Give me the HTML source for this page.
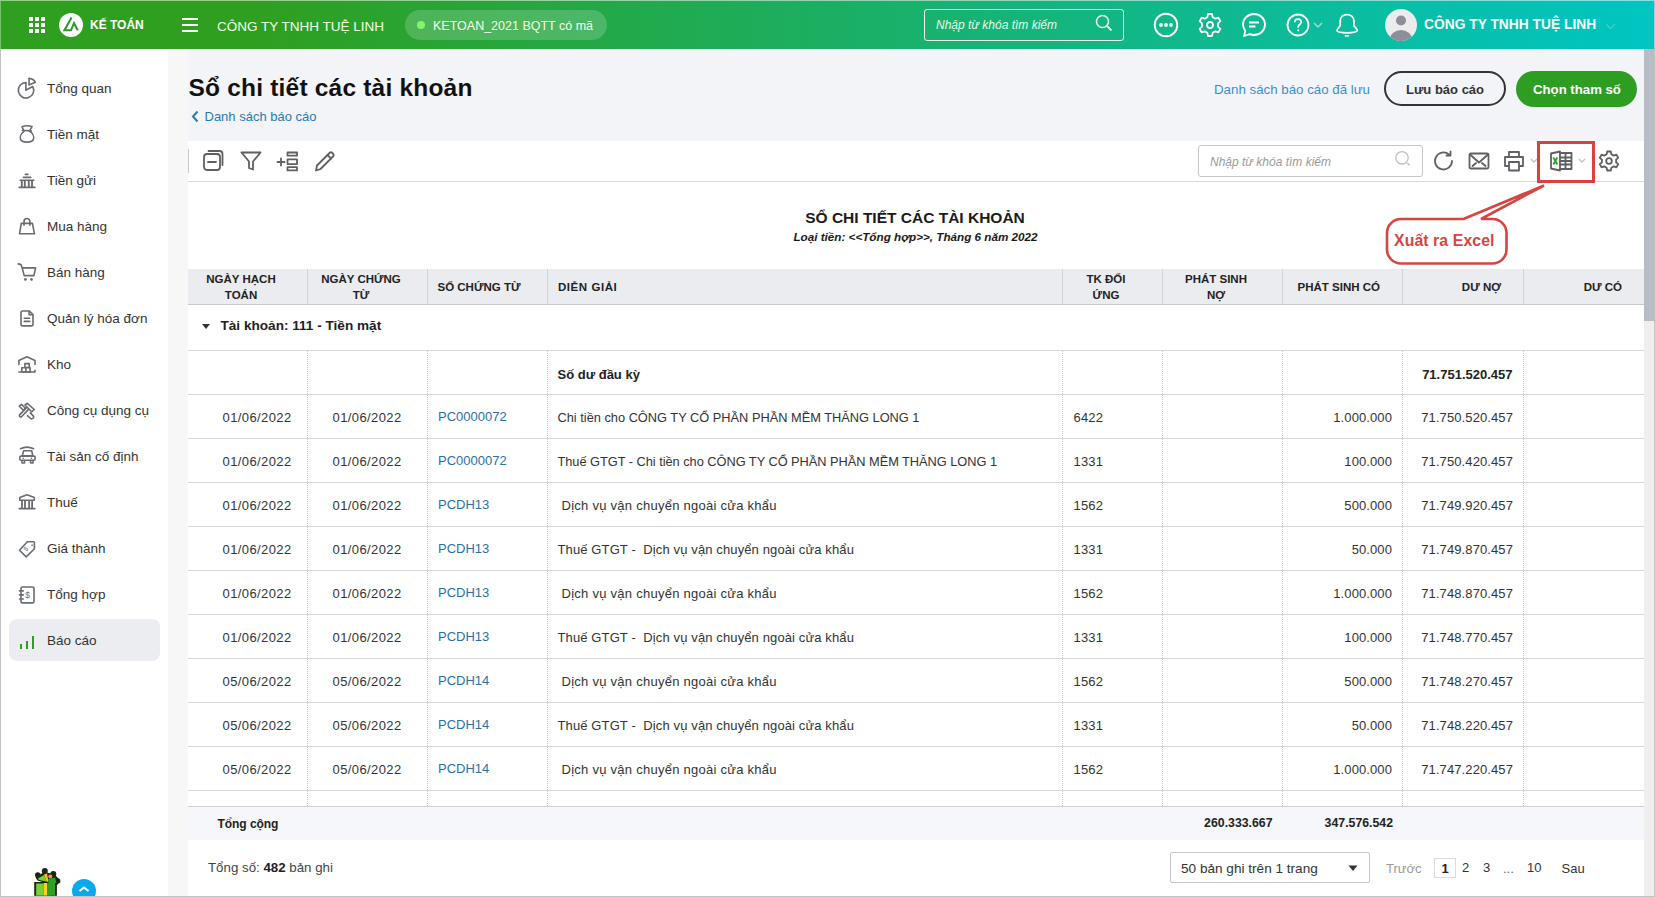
<!DOCTYPE html>
<html><head><meta charset="utf-8">
<style>
*{margin:0;padding:0;box-sizing:border-box}
html,body{width:1655px;height:897px;overflow:hidden;background:#f3f4f8;font-family:"Liberation Sans",sans-serif;color:#333}
.a{position:absolute}
.t{position:absolute;white-space:nowrap;line-height:1}
svg{display:block}
</style></head><body>
<div class="a" style="left:0px;top:0px;width:1655px;height:49px;background:linear-gradient(90deg,#2f9f1f 15%,#00c5c3 100%)"></div>
<div class="a" style="left:0px;top:0px;width:1655px;height:1px;background:rgba(255,255,255,0.5)"></div>
<div class="a" style="left:0px;top:1px;width:1px;height:48px;background:rgba(255,255,255,0.35)"></div>
<svg class="a" style="left:29px;top:17px;" width="16" height="16" viewBox="0 0 16 16"><g fill="#fff"><rect x="0" y="0" width="4" height="4"/><rect x="6" y="0" width="4" height="4"/><rect x="12" y="0" width="4" height="4"/><rect x="0" y="6" width="4" height="4"/><rect x="6" y="6" width="4" height="4"/><rect x="12" y="6" width="4" height="4"/><rect x="0" y="12" width="4" height="4"/><rect x="6" y="12" width="4" height="4"/><rect x="12" y="12" width="4" height="4"/></g></svg>
<svg class="a" style="left:59px;top:13px;" width="24" height="24" viewBox="0 0 24 24"><circle cx="12" cy="12" r="12" fill="#fff"/><path d="M12.6 4.6L5.4 17.3H12L15 10.2L18.8 17.3" fill="none" stroke="#2f9a2a" stroke-width="2.1" stroke-linejoin="miter"/></svg>
<div class="t" style="left:90px;top:19.04px;font-size:12px;color:#fff;font-weight:bold">KẾ TOÁN</div>
<svg class="a" style="left:182px;top:17px;" width="16" height="16" viewBox="0 0 16 16"><g fill="#fff"><rect x="0" y="1" width="16" height="2"/><rect x="0" y="7" width="16" height="2"/><rect x="0" y="13" width="16" height="2"/></g></svg>
<div class="t" style="left:217px;top:19.77px;font-size:13.5px;color:#f4ffe8">CÔNG TY TNHH TUỆ LINH</div>
<div class="a" style="left:405px;top:10px;width:202px;height:30px;border-radius:15px;background:rgba(255,255,255,0.18)"></div>
<div class="a" style="left:417px;top:21px;width:8px;height:8px;border-radius:4px;background:#82f56f"></div>
<div class="t" style="left:433px;top:19.62px;font-size:12.5px;color:#f4ffe8">KETOAN_2021 BQTT có mã</div>
<div class="a" style="left:924px;top:9px;width:200px;height:32px;border:1px solid rgba(255,255,255,0.9);border-radius:3px"></div>
<div class="t" style="left:936px;top:19.34px;font-size:12px;color:#e6fbe9;font-style:italic">Nhập từ khóa tìm kiếm</div>
<svg class="a" style="left:1095px;top:14px;" width="18" height="18" viewBox="0 0 18 18"><circle cx="7.5" cy="7.5" r="6" fill="none" stroke="#dff3ea" stroke-width="1.6"/><path d="M12 12 L16.5 16.5" stroke="#dff3ea" stroke-width="1.8"/></svg>
<svg class="a" style="left:1153px;top:12px;" width="26" height="26" viewBox="0 0 26 26"><circle cx="13" cy="13" r="11.3" fill="none" stroke="#fff" stroke-width="1.9"/><circle cx="8" cy="13" r="1.9" fill="#fff"/><circle cx="13" cy="13" r="1.9" fill="#fff"/><circle cx="18" cy="13" r="1.9" fill="#fff"/></svg>
<svg class="a" style="left:1198px;top:12px;" width="24" height="26" viewBox="0 0 24 26"><path d="M10 2h4l.7 3.2 2.6 1.5 3.1-1 2 3.5-2.4 2.2v3.2l2.4 2.2-2 3.5-3.1-1-2.6 1.5L14 24h-4l-.7-3.2-2.6-1.5-3.1 1-2-3.5 2.4-2.2v-3.2L1.6 9.2l2-3.5 3.1 1 2.6-1.5Z" fill="none" stroke="#fff" stroke-width="1.8" stroke-linejoin="round"/><circle cx="12" cy="13" r="3" fill="none" stroke="#fff" stroke-width="1.8"/></svg>
<svg class="a" style="left:1241px;top:12px;" width="26" height="26" viewBox="0 0 26 26"><path d="M13 2C19 2 24 6.5 24 12.5S19 23 13 23c-1.5 0-3-.3-4.2-.8L3 24l1.3-5C3.1 17.2 2 15 2 12.5 2 6.5 7 2 13 2Z" fill="none" stroke="#fff" stroke-width="1.8" stroke-linejoin="round"/><path d="M8 10.5h10M8 14.5h6.5" stroke="#fff" stroke-width="1.8"/></svg>
<svg class="a" style="left:1286px;top:13px;" width="24" height="24" viewBox="0 0 24 24"><circle cx="12" cy="12" r="10.5" fill="none" stroke="#fff" stroke-width="1.8"/><path d="M8.8 9.3c0-1.9 1.4-3.1 3.2-3.1s3.2 1.2 3.2 2.9c0 2.4-3 2.4-3 4.9v.8" fill="none" stroke="#fff" stroke-width="1.7"/><circle cx="12.2" cy="17.3" r="1.1" fill="#fff"/></svg>
<svg class="a" style="left:1313px;top:22px;" width="10" height="7" viewBox="0 0 10 7"><path d="M1 1l4 4 4-4" fill="none" stroke="#9fdcc8" stroke-width="1.5"/></svg>
<svg class="a" style="left:1335px;top:12px;" width="24" height="26" viewBox="0 0 24 26"><path d="M12 2.6C8 2.6 5.2 5.2 5.2 9V13C5.2 15 2 16.5 2 18.6 2 20.2 4.5 20.8 12 20.8S22.2 20.2 22.2 18.6C22.2 16.5 18.9 15 18.9 13V9C18.9 5.2 16 2.6 12 2.6Z" fill="none" stroke="#fff" stroke-width="1.8"/><path d="M9.4 23H14.6L13.5 24.7H10.5Z" fill="#fff"/></svg>
<svg class="a" style="left:1385px;top:9px;" width="32" height="32" viewBox="0 0 32 32"><defs><clipPath id="cc"><circle cx="16" cy="16" r="16"/></clipPath></defs><circle cx="16" cy="16" r="16" fill="#ececee"/><g clip-path="url(#cc)" fill="#8e8e99"><circle cx="16" cy="11.5" r="5"/><ellipse cx="16" cy="30" rx="11" ry="9"/></g></svg>
<div class="t" style="left:1424px;top:18.32px;font-size:13.8px;color:#f4fffc;font-weight:bold">CÔNG TY TNHH TUỆ LINH</div>
<svg class="a" style="left:1605px;top:23px;" width="11" height="7" viewBox="0 0 11 7"><path d="M1 1l4.5 4.5L10 1" fill="none" stroke="#3ccfc0" stroke-width="1.3"/></svg>
<div class="a" style="left:1654px;top:0px;width:1px;height:49px;background:#b5c8c8"></div>
<div class="a" style="left:0px;top:49px;width:168px;height:848px;background:#fff"></div>
<div class="a" style="left:0px;top:49px;width:1px;height:848px;background:#c2c2c2"></div>
<div class="a" style="left:168px;top:49px;width:20px;height:848px;background:#f7f7f7"></div>
<div class="a" style="left:9px;top:619px;width:151px;height:42px;background:#ebedf0;border-radius:8px"></div>
<div class="t" style="left:47px;top:82.07px;font-size:13.5px;color:#333">Tổng quan</div>
<svg class="a" style="left:14px;top:74px;" width="26" height="26" viewBox="0 0 26 26"><path d="M12 8.6A7.7 7.7 0 1 0 18.7 12.5L11.8 16.2Z" fill="none" stroke="#6b6b70" stroke-width="1.6" stroke-linejoin="round" stroke-linecap="round"/><path d="M15 4.4V11L21.3 8.3C20.2 6 18 4.6 15 4.4Z" fill="none" stroke="#6b6b70" stroke-width="1.6" stroke-linejoin="round" stroke-linecap="round"/></svg>
<div class="t" style="left:47px;top:128.07px;font-size:13.5px;color:#333">Tiền mặt</div>
<svg class="a" style="left:14px;top:120px;" width="26" height="26" viewBox="0 0 26 26"><path d="M8 6.7Q13 5 18 6.5L15.6 10.9Q12.6 10.2 9.7 10.6Z" fill="none" stroke="#6b6b70" stroke-width="1.6" stroke-linejoin="round" stroke-linecap="round"/><path d="M8.4 10.3L9.8 10.7M15.6 10.9L17.4 11.1" fill="none" stroke="#6b6b70" stroke-width="1.6" stroke-linejoin="round" stroke-linecap="round"/><path d="M10 11.4C6.2 14.2 5.8 17.8 6.7 19.7 7.8 22 10.4 22.1 13 22.1S18.2 22 19.3 19.7C20.2 17.8 19.8 14.2 15.9 11.4" fill="none" stroke="#6b6b70" stroke-width="1.6" stroke-linejoin="round" stroke-linecap="round"/></svg>
<div class="t" style="left:47px;top:174.07px;font-size:13.5px;color:#333">Tiền gửi</div>
<svg class="a" style="left:14px;top:166px;" width="26" height="26" viewBox="0 0 26 26"><path d="M11.4 8.4H13.9M9.3 11.4H16.8M6.2 14.3H19.9M5.2 21.4H20.9" fill="none" stroke="#6b6b70" stroke-width="1.6" stroke-linejoin="round" stroke-linecap="round"/><path d="M7.8 14.3V21.4M10.8 14.3V21.4M14.8 14.3V21.4M18 14.3V21.4" fill="none" stroke="#6b6b70" stroke-width="1.9"/></svg>
<div class="t" style="left:47px;top:220.07px;font-size:13.5px;color:#333">Mua hàng</div>
<svg class="a" style="left:14px;top:212px;" width="26" height="26" viewBox="0 0 26 26"><path d="M7.3 11.4H18.4L20.5 21.8H5.5Z" fill="none" stroke="#6b6b70" stroke-width="1.6" stroke-linejoin="round" stroke-linecap="round"/><path d="M10 13.3V9.5A2.95 2.95 0 0 1 15.9 9.5V13.3" fill="none" stroke="#6b6b70" stroke-width="1.6" stroke-linejoin="round" stroke-linecap="round"/></svg>
<div class="t" style="left:47px;top:266.07px;font-size:13.5px;color:#333">Bán hàng</div>
<svg class="a" style="left:14px;top:258px;" width="26" height="26" viewBox="0 0 26 26"><path d="M4.2 5.9L7 6.6L8.2 9.9H21.6L19.9 17.6H10.2L8.2 9.9" fill="none" stroke="#6b6b70" stroke-width="1.6" stroke-linejoin="round" stroke-linecap="round"/><circle cx="11.4" cy="21.4" r="1.35" fill="#6b6b70"/><circle cx="17.5" cy="21.4" r="1.35" fill="#6b6b70"/></svg>
<div class="t" style="left:47px;top:312.07px;font-size:13.5px;color:#333">Quản lý hóa đơn</div>
<svg class="a" style="left:14px;top:304px;" width="26" height="26" viewBox="0 0 26 26"><path d="M8.5 7H15.3L19 10.6V20.4A1.5 1.5 0 0 1 17.5 21.9H8.5A1.5 1.5 0 0 1 7 20.4V8.5A1.5 1.5 0 0 1 8.5 7Z" fill="none" stroke="#6b6b70" stroke-width="1.6" stroke-linejoin="round" stroke-linecap="round"/><path d="M15.1 7.2V10.7H18.8M10.3 14.3H15.7M10.3 17.4H15.7" fill="none" stroke="#6b6b70" stroke-width="1.6" stroke-linejoin="round" stroke-linecap="round"/></svg>
<div class="t" style="left:47px;top:358.07px;font-size:13.5px;color:#333">Kho</div>
<svg class="a" style="left:14px;top:350px;" width="26" height="26" viewBox="0 0 26 26"><path d="M4.9 14.5V10.4L12.9 6.8L21 10.4V14.5M4.9 22H21V20.3" fill="none" stroke="#6b6b70" stroke-width="1.6" stroke-linejoin="round" stroke-linecap="round"/><path d="M10.9 13.6H15.2V17.6H10.9ZM7.8 17.7H11.9V22H7.8ZM11.9 17.7H16.1V22H11.9Z" fill="none" stroke="#6b6b70" stroke-width="1.6" stroke-linejoin="round" stroke-linecap="round"/></svg>
<div class="t" style="left:47px;top:404.07px;font-size:13.5px;color:#333">Công cụ dụng cụ</div>
<svg class="a" style="left:14px;top:396px;" width="26" height="26" viewBox="0 0 26 26"><path d="M11 9L13.2 7.4L20.3 13.5L17.6 15.8Z" fill="none" stroke="#6b6b70" stroke-width="1.6" stroke-linejoin="round" stroke-linecap="round"/><path d="M14.3 13.6L7.5 20.8A1.4 1.4 0 0 1 5.6 18.9L12.3 11.9" fill="none" stroke="#6b6b70" stroke-width="1.6" stroke-linejoin="round" stroke-linecap="round"/><path d="M5.3 10.2L7.5 8.3L11.4 12.2L9.4 14.3Z" fill="none" stroke="#6b6b70" stroke-width="1.6" stroke-linejoin="round" stroke-linecap="round"/><path d="M16.3 16.9L19 19.6A1.9 1.9 0 0 1 16.3 22.3L13.5 19.6" fill="none" stroke="#6b6b70" stroke-width="1.6" stroke-linejoin="round" stroke-linecap="round"/></svg>
<div class="t" style="left:47px;top:450.07px;font-size:13.5px;color:#333">Tài sản cố định</div>
<svg class="a" style="left:14px;top:442px;" width="26" height="26" viewBox="0 0 26 26"><path d="M6.5 6.7Q13 3.5 19.7 6.7" fill="none" stroke="#6b6b70" stroke-width="1.6" stroke-linejoin="round" stroke-linecap="round"/><path d="M9.6 8.7H17.7L18.8 13.8H8.3Z" fill="none" stroke="#6b6b70" stroke-width="1.6" stroke-linejoin="round" stroke-linecap="round"/><rect x="5.8" y="14.1" width="15.3" height="4.2" rx="1.2" fill="none" stroke="#6b6b70" stroke-width="1.6" stroke-linejoin="round" stroke-linecap="round"/><circle cx="9.3" cy="16.3" r="0.8" fill="#6b6b70"/><circle cx="17.4" cy="16.3" r="0.8" fill="#6b6b70"/><path d="M8 18.5V21H10.5V18.5M16.6 18.5V21H19V18.5" fill="none" stroke="#6b6b70" stroke-width="1.6" stroke-linejoin="round" stroke-linecap="round"/></svg>
<div class="t" style="left:47px;top:496.07px;font-size:13.5px;color:#333">Thuế</div>
<svg class="a" style="left:14px;top:488px;" width="26" height="26" viewBox="0 0 26 26"><path d="M5.8 12.2V9.6L13 6.7L20.3 9.6V12.2Z" fill="none" stroke="#6b6b70" stroke-width="1.6" stroke-linejoin="round" stroke-linecap="round"/><path d="M8 12.2V20.5M11 12.2V20.5M15.1 12.2V20.5M18.1 12.2V20.5" fill="none" stroke="#6b6b70" stroke-width="1.8"/><path d="M5.2 20.6H20.9" fill="none" stroke="#6b6b70" stroke-width="1.6" stroke-linejoin="round" stroke-linecap="round"/></svg>
<div class="t" style="left:47px;top:542.07px;font-size:13.5px;color:#333">Giá thành</div>
<svg class="a" style="left:14px;top:534px;" width="26" height="26" viewBox="0 0 26 26"><path d="M13.3 7.8H19.4A1 1 0 0 1 20.4 8.8V14.8L12.2 22.9L5.5 16.2Z" fill="none" stroke="#6b6b70" stroke-width="1.6" stroke-linejoin="round" stroke-linecap="round"/><rect x="17.4" y="10.4" width="1.4" height="1.4" fill="#6b6b70"/><text x="0" y="0" font-size="6.5" fill="#6b6b70" font-family="Liberation Sans" transform="translate(12.2 17.8) rotate(-45)">$</text></svg>
<div class="t" style="left:47px;top:588.07px;font-size:13.5px;color:#333">Tổng hợp</div>
<svg class="a" style="left:14px;top:580px;" width="26" height="26" viewBox="0 0 26 26"><rect x="7" y="7" width="13" height="15.9" rx="1.5" fill="none" stroke="#6b6b70" stroke-width="1.6" stroke-linejoin="round" stroke-linecap="round"/><path d="M5.5 10.9H9.3M5.5 14.9H9.3M5.5 19H9.3" fill="none" stroke="#6b6b70" stroke-width="1.6" stroke-linejoin="round" stroke-linecap="round"/><text x="11.2" y="18" font-size="8.5" fill="#6b6b70" font-family="Liberation Sans">$</text></svg>
<div class="t" style="left:47px;top:634.07px;font-size:13.5px;color:#333">Báo cáo</div>
<div class="a" style="left:20px;top:644px;width:2.2px;height:5px;background:#2e9e22"></div>
<div class="a" style="left:26px;top:641px;width:2.2px;height:8px;background:#2e9e22"></div>
<div class="a" style="left:32px;top:636px;width:2.2px;height:13px;background:#2e9e22"></div>
<svg class="a" style="left:33px;top:866px;" width="28" height="31" viewBox="0 0 28 31"><g fill="#1d2618"><circle cx="4.8" cy="9" r="2.8"/><circle cx="11.8" cy="5" r="3"/><circle cx="20.3" cy="8" r="3"/><circle cx="24.6" cy="15" r="2.8"/><path d="M2.5 11.5L11 6L21 8L26 13L24.5 19L14 17.5L4.5 14.5Z"/><rect x="1.2" y="16" width="22.7" height="13.8"/></g><path d="M5 12.5L11 9L13.5 15.5L6 14Z" fill="#79d13a"/><path d="M11 8.5L14 7.5L15.5 16L13.5 15.5Z" fill="#ffc21a"/><circle cx="17.3" cy="10.5" r="2" fill="#f39a25"/><path d="M15 13L22 11.5L23.5 17L15.5 17Z" fill="#2fa024"/><rect x="3.2" y="17.5" width="7.6" height="12" fill="#79d13a"/><rect x="10.8" y="17" width="3.6" height="12.5" fill="#ffd21a"/><rect x="14.4" y="17" width="7.6" height="12.5" fill="#2fa024"/></svg>
<svg class="a" style="left:72px;top:879px;" width="24" height="18" viewBox="0 0 24 18"><circle cx="12" cy="12" r="12" fill="#0aa8ee"/><path d="M7.5 12l4.5-3.5 4.5 3.5" fill="none" stroke="#fff" stroke-width="2"/></svg>
<div class="t" style="left:188.5px;top:75.96px;font-size:24.5px;color:#111;font-weight:bold;letter-spacing:0.2px">Sổ chi tiết các tài khoản</div>
<svg class="a" style="left:191px;top:110px;" width="8" height="13" viewBox="0 0 8 13"><path d="M6.5 1.5L2 6.5l4.5 5" fill="none" stroke="#2c78b6" stroke-width="2"/></svg>
<div class="t" style="left:204.5px;top:109.90px;font-size:13px;color:#2c78b6">Danh sách báo cáo</div>
<div class="t" style="left:1214px;top:83.14px;font-size:13.3px;color:#3b8fd0">Danh sách báo cáo đã lưu</div>
<div class="a" style="left:1384px;top:71px;width:122px;height:35px;border:2px solid #333;border-radius:18px"></div>
<div class="t" style="left:1406px;top:83.40px;font-size:13px;color:#333;font-weight:bold">Lưu báo cáo</div>
<div class="a" style="left:1516px;top:71px;width:121px;height:36px;background:#2e9e22;border-radius:18px"></div>
<div class="t" style="left:1533px;top:83.23px;font-size:13.2px;color:#fff;font-weight:bold">Chọn tham số</div>
<div class="a" style="left:1644px;top:49px;width:11px;height:848px;background:#efefef"></div>
<div class="a" style="left:1644px;top:49px;width:10px;height:272px;background:#b8bcc5"></div>
<div class="a" style="left:1654px;top:49px;width:1px;height:848px;background:#c4c4c4"></div>
<div class="a" style="left:188px;top:141px;width:1456px;height:755px;background:#fff"></div>
<div class="a" style="left:188px;top:181px;width:1456px;height:1px;background:#dadada"></div>
<div class="a" style="left:188px;top:149px;width:1px;height:24px;background:#c8c8c8"></div>
<svg class="a" style="left:202px;top:149px;" width="24" height="23" viewBox="0 0 24 23"><rect x="2" y="5" width="16" height="16" rx="3" fill="none" stroke="#5f5f64" stroke-width="1.8" stroke-linejoin="round" stroke-linecap="round"/><path d="M6 13h8" fill="none" stroke="#5f5f64" stroke-width="1.8" stroke-linejoin="round" stroke-linecap="round"/><path d="M6.5 2h11a3 3 0 0 1 3 3v11" fill="none" stroke="#5f5f64" stroke-width="1.8" stroke-linejoin="round" stroke-linecap="round"/></svg>
<svg class="a" style="left:240px;top:151px;" width="22" height="20" viewBox="0 0 22 20"><path d="M1.5 1.5h19l-7.5 9v8l-4-1.5v-6.5Z" fill="none" stroke="#5f5f64" stroke-width="1.8" stroke-linejoin="round" stroke-linecap="round"/></svg>
<svg class="a" style="left:276px;top:151px;" width="23" height="21" viewBox="0 0 23 21"><path d="M1.5 11h7M5 7.5v7" fill="none" stroke="#5f5f64" stroke-width="1.8" stroke-linejoin="round" stroke-linecap="round"/><rect x="11.5" y="1.5" width="9.5" height="3.2" fill="none" stroke="#5f5f64" stroke-width="1.8" stroke-linejoin="round" stroke-linecap="round"/><rect x="11.5" y="8.3" width="9.5" height="4.8" fill="none" stroke="#5f5f64" stroke-width="1.8" stroke-linejoin="round" stroke-linecap="round"/><rect x="11.5" y="16.2" width="9.5" height="3.2" fill="none" stroke="#5f5f64" stroke-width="1.8" stroke-linejoin="round" stroke-linecap="round"/></svg>
<svg class="a" style="left:314px;top:150px;" width="22" height="22" viewBox="0 0 22 22"><path d="M2 20.5l1-5L15.5 3a2 2 0 0 1 2.8 0l.7.7a2 2 0 0 1 0 2.8L6.5 19Z" fill="none" stroke="#5f5f64" stroke-width="1.8" stroke-linejoin="round" stroke-linecap="round"/><path d="M13.5 5l3.5 3.5" fill="none" stroke="#5f5f64" stroke-width="1.8" stroke-linejoin="round" stroke-linecap="round"/></svg>
<div class="a" style="left:1198px;top:145px;width:225px;height:32px;border:1px solid #c6c6ca;border-radius:3px"></div>
<div class="t" style="left:1210px;top:155.54px;font-size:12px;color:#9a9a9a;font-style:italic">Nhập từ khóa tìm kiếm</div>
<svg class="a" style="left:1394px;top:150px;" width="18" height="18" viewBox="0 0 18 18"><circle cx="8" cy="7.8" r="6.2" fill="none" stroke="#c2c2c2" stroke-width="1.4"/><path d="M13.3 13.1l2.2 2.2" stroke="#c2c2c2" stroke-width="1.6"/></svg>
<svg class="a" style="left:1433px;top:150px;" width="22" height="22" viewBox="0 0 22 22"><path d="M19 11a8.5 8.5 0 1 1-3-6.5" fill="none" stroke="#5f5f64" stroke-width="1.8" stroke-linejoin="round" stroke-linecap="round"/><path d="M17.5 1.5v4h-4" fill="none" stroke="#5f5f64" stroke-width="1.8" stroke-linejoin="round" stroke-linecap="round"/></svg>
<svg class="a" style="left:1468px;top:152px;" width="22" height="18" viewBox="0 0 22 18"><rect x="1.5" y="1.5" width="19" height="15" rx="1.5" fill="none" stroke="#5f5f64" stroke-width="1.8" stroke-linejoin="round" stroke-linecap="round"/><path d="M2 2.5l9 8 9-8M4.5 14l3.5-3M17.5 14l-3.5-3" fill="none" stroke="#5f5f64" stroke-width="1.8" stroke-linejoin="round" stroke-linecap="round"/></svg>
<svg class="a" style="left:1503px;top:150px;" width="22" height="22" viewBox="0 0 22 22"><path d="M6 6V2h10v4" fill="none" stroke="#5f5f64" stroke-width="1.8" stroke-linejoin="round" stroke-linecap="round"/><path d="M5 16H2V7h18v9h-3" fill="none" stroke="#5f5f64" stroke-width="1.8" stroke-linejoin="round" stroke-linecap="round"/><rect x="6" y="12" width="10" height="8.5" fill="none" stroke="#5f5f64" stroke-width="1.8" stroke-linejoin="round" stroke-linecap="round"/></svg>
<svg class="a" style="left:1530px;top:158px;" width="8" height="6" viewBox="0 0 8 6"><path d="M1 1l3 3 3-3" fill="none" stroke="#c2c2c8" stroke-width="1.4"/></svg>
<svg class="a" style="left:1549px;top:150px;" width="25" height="22" viewBox="0 0 25 22"><path d="M2 3.5l9-2v19l-9-2Z" fill="none" stroke="#5f5f64" stroke-width="1.8" stroke-linejoin="round" stroke-linecap="round"/><path d="M11 3h11.5v16H11M11 7.5h11.5M11 11h11.5M11 14.5h11.5M16.5 3v16" fill="none" stroke="#5f5f64" stroke-width="1.8" stroke-linejoin="round" stroke-linecap="round"/><path d="M4.3 7.5l4 7M8.3 7.5l-4 7" stroke="#2e9e22" stroke-width="1.8"/></svg>
<svg class="a" style="left:1578px;top:158px;" width="8" height="6" viewBox="0 0 8 6"><path d="M1 1l3 3 3-3" fill="none" stroke="#c2c2c8" stroke-width="1.4"/></svg>
<svg class="a" style="left:1598px;top:150px;" width="22" height="22" viewBox="0 0 22 22"><path d="M9.2 1.5h3.6l.6 2.8 2.3 1.3 2.7-.9 1.8 3.1-2.1 1.9v2.6l2.1 1.9-1.8 3.1-2.7-.9-2.3 1.3-.6 2.8H9.2l-.6-2.8-2.3-1.3-2.7.9-1.8-3.1 2.1-1.9V9.7L1.8 7.8l1.8-3.1 2.7.9 2.3-1.3Z" fill="none" stroke="#5f5f64" stroke-width="1.8" stroke-linejoin="round" stroke-linecap="round"/><circle cx="11" cy="11" r="2.8" fill="none" stroke="#5f5f64" stroke-width="1.8" stroke-linejoin="round" stroke-linecap="round"/></svg>
<div class="a" style="left:1537px;top:141px;width:58px;height:42px;border:3px solid #d9413c"></div>
<svg class="a" style="left:1384px;top:182px;overflow:visible" width="130" height="85" viewBox="0 0 130 85"><path d="M79.5 37 L160 3.5 L97 37 H108.5 a14 14 0 0 1 14 14 V67.5 a14 14 0 0 1 -14 14 H17 a14 14 0 0 1 -14 -14 V51 a14 14 0 0 1 14 -14 Z" fill="#fff" stroke="#d64541" stroke-width="2.6" stroke-linejoin="miter"/></svg>
<div class="t" style="left:1394px;top:233.13px;font-size:15.8px;color:#d64541;font-weight:bold;letter-spacing:0.1px">Xuất ra Excel</div>
<div class="t" style="left:715.0px;width:400px;text-align:center;top:209.88px;font-size:15.5px;color:#1a1a1a;font-weight:bold">SỔ CHI TIẾT CÁC TÀI KHOẢN</div>
<div class="t" style="left:715.5px;width:400px;text-align:center;top:231.00px;font-size:11.7px;color:#1a1a1a;font-weight:bold;font-style:italic">Loại tiền: &lt;&lt;Tổng hợp&gt;&gt;, Tháng 6 năm 2022</div>
<div class="a" style="left:188px;top:269px;width:1456px;height:35px;background:#ebecf0"></div>
<div class="a" style="left:188px;top:304px;width:1456px;height:1px;background:#c9c9cc"></div>
<div class="a" style="left:307px;top:269px;width:1px;height:35px;background:#d3d3d6"></div>
<div class="a" style="left:427px;top:269px;width:1px;height:35px;background:#d3d3d6"></div>
<div class="a" style="left:547px;top:269px;width:1px;height:35px;background:#d3d3d6"></div>
<div class="a" style="left:1062px;top:269px;width:1px;height:35px;background:#d3d3d6"></div>
<div class="a" style="left:1162px;top:269px;width:1px;height:35px;background:#d3d3d6"></div>
<div class="a" style="left:1282px;top:269px;width:1px;height:35px;background:#d3d3d6"></div>
<div class="a" style="left:1402px;top:269px;width:1px;height:35px;background:#d3d3d6"></div>
<div class="a" style="left:1523px;top:269px;width:1px;height:35px;background:#d3d3d6"></div>
<div class="t" style="left:188.0px;width:106px;text-align:center;top:273.57px;font-size:11.5px;color:#222;font-weight:bold">NGÀY HẠCH</div>
<div class="t" style="left:188.0px;width:106px;text-align:center;top:289.97px;font-size:11.5px;color:#222;font-weight:bold">TOÁN</div>
<div class="t" style="left:307.0px;width:108px;text-align:center;top:273.57px;font-size:11.5px;color:#222;font-weight:bold">NGÀY CHỨNG</div>
<div class="t" style="left:307.0px;width:108px;text-align:center;top:289.97px;font-size:11.5px;color:#222;font-weight:bold">TỪ</div>
<div class="t" style="left:437.5px;top:281.77px;font-size:11.5px;color:#222;font-weight:bold">SỐ CHỨNG TỪ</div>
<div class="t" style="left:558px;top:281.77px;font-size:11.5px;color:#222;font-weight:bold;letter-spacing:0.55px">DIỄN GIẢI</div>
<div class="t" style="left:1062.0px;width:88px;text-align:center;top:273.57px;font-size:11.5px;color:#222;font-weight:bold">TK ĐỐI</div>
<div class="t" style="left:1062.0px;width:88px;text-align:center;top:289.97px;font-size:11.5px;color:#222;font-weight:bold">ỨNG</div>
<div class="t" style="left:1162.0px;width:108px;text-align:center;top:273.57px;font-size:11.5px;color:#222;font-weight:bold">PHÁT SINH</div>
<div class="t" style="left:1162.0px;width:108px;text-align:center;top:289.97px;font-size:11.5px;color:#222;font-weight:bold">NỢ</div>
<div class="t" style="right:275px;top:281.77px;font-size:11.5px;color:#222;font-weight:bold">PHÁT SINH CÓ</div>
<div class="t" style="right:154px;top:281.77px;font-size:11.5px;color:#222;font-weight:bold">DƯ NỢ</div>
<div class="t" style="right:33px;top:281.77px;font-size:11.5px;color:#222;font-weight:bold">DƯ CÓ</div>
<svg class="a" style="left:201px;top:323px;" width="10" height="7" viewBox="0 0 10 7"><path d="M1 1h8L5 6Z" fill="#333"/></svg>
<div class="t" style="left:220.5px;top:319.19px;font-size:13.6px;color:#222;font-weight:bold">Tài khoản: 111 - Tiền mặt</div>
<div class="a" style="left:188px;top:350px;width:1456px;height:1px;background:#d7d7d9"></div>
<div class="a" style="left:188px;top:394px;width:1456px;height:1px;background:#d7d7d9"></div>
<div class="a" style="left:188px;top:438px;width:1456px;height:1px;background:#d7d7d9"></div>
<div class="a" style="left:188px;top:482px;width:1456px;height:1px;background:#d7d7d9"></div>
<div class="a" style="left:188px;top:526px;width:1456px;height:1px;background:#d7d7d9"></div>
<div class="a" style="left:188px;top:570px;width:1456px;height:1px;background:#d7d7d9"></div>
<div class="a" style="left:188px;top:614px;width:1456px;height:1px;background:#d7d7d9"></div>
<div class="a" style="left:188px;top:658px;width:1456px;height:1px;background:#d7d7d9"></div>
<div class="a" style="left:188px;top:702px;width:1456px;height:1px;background:#d7d7d9"></div>
<div class="a" style="left:188px;top:746px;width:1456px;height:1px;background:#d7d7d9"></div>
<div class="a" style="left:188px;top:790px;width:1456px;height:1px;background:#d7d7d9"></div>
<div class="a" style="left:188px;top:806px;width:1456px;height:1px;background:#cfcfd2"></div>
<div class="a" style="left:307px;top:351px;width:1px;height:455px;border-left:1px dotted #c9c9cc"></div>
<div class="a" style="left:427px;top:351px;width:1px;height:455px;border-left:1px dotted #c9c9cc"></div>
<div class="a" style="left:547px;top:351px;width:1px;height:455px;border-left:1px dotted #c9c9cc"></div>
<div class="a" style="left:1062px;top:351px;width:1px;height:455px;border-left:1px dotted #c9c9cc"></div>
<div class="a" style="left:1162px;top:351px;width:1px;height:455px;border-left:1px dotted #c9c9cc"></div>
<div class="a" style="left:1282px;top:351px;width:1px;height:455px;border-left:1px dotted #c9c9cc"></div>
<div class="a" style="left:1402px;top:351px;width:1px;height:455px;border-left:1px dotted #c9c9cc"></div>
<div class="a" style="left:1523px;top:351px;width:1px;height:455px;border-left:1px dotted #c9c9cc"></div>
<div class="t" style="left:557.5px;top:367.50px;font-size:13px;color:#222;font-weight:bold">Số dư đầu kỳ</div>
<div class="t" style="right:142.5px;top:367.50px;font-size:13px;color:#222;font-weight:bold">71.751.520.457</div>
<div class="t" style="left:222.5px;top:411.40px;font-size:13px;color:#333;letter-spacing:0.4px">01/06/2022</div>
<div class="t" style="left:332.5px;top:411.40px;font-size:13px;color:#333;letter-spacing:0.4px">01/06/2022</div>
<div class="t" style="left:438px;top:410.40px;font-size:13px;color:#2d6fa9">PC0000072</div>
<div class="t" style="left:557.5px;top:411.56px;font-size:12.8px;color:#333">Chi tiền cho CÔNG TY CỔ PHẦN PHẦN MỀM THĂNG LONG 1</div>
<div class="t" style="left:1073.5px;top:411.40px;font-size:13px;color:#333;letter-spacing:0.2px">6422</div>
<div class="t" style="right:263px;top:411.40px;font-size:13px;color:#333;letter-spacing:0.1px">1.000.000</div>
<div class="t" style="right:142px;top:411.40px;font-size:13px;color:#333;letter-spacing:0.1px">71.750.520.457</div>
<div class="t" style="left:222.5px;top:455.40px;font-size:13px;color:#333;letter-spacing:0.4px">01/06/2022</div>
<div class="t" style="left:332.5px;top:455.40px;font-size:13px;color:#333;letter-spacing:0.4px">01/06/2022</div>
<div class="t" style="left:438px;top:454.40px;font-size:13px;color:#2d6fa9">PC0000072</div>
<div class="t" style="left:557.5px;top:455.56px;font-size:12.8px;color:#333;letter-spacing:-0.03px">Thuế GTGT - Chi tiền cho CÔNG TY CỔ PHẦN PHẦN MỀM THĂNG LONG 1</div>
<div class="t" style="left:1073.5px;top:455.40px;font-size:13px;color:#333;letter-spacing:0.2px">1331</div>
<div class="t" style="right:263px;top:455.40px;font-size:13px;color:#333;letter-spacing:0.1px">100.000</div>
<div class="t" style="right:142px;top:455.40px;font-size:13px;color:#333;letter-spacing:0.1px">71.750.420.457</div>
<div class="t" style="left:222.5px;top:499.40px;font-size:13px;color:#333;letter-spacing:0.4px">01/06/2022</div>
<div class="t" style="left:332.5px;top:499.40px;font-size:13px;color:#333;letter-spacing:0.4px">01/06/2022</div>
<div class="t" style="left:438px;top:498.40px;font-size:13px;color:#2d6fa9">PCDH13</div>
<div class="t" style="left:561.5px;top:499.40px;font-size:13px;color:#333;letter-spacing:0.26px">Dịch vụ vận chuyển ngoài cửa khẩu</div>
<div class="t" style="left:1073.5px;top:499.40px;font-size:13px;color:#333;letter-spacing:0.2px">1562</div>
<div class="t" style="right:263px;top:499.40px;font-size:13px;color:#333;letter-spacing:0.1px">500.000</div>
<div class="t" style="right:142px;top:499.40px;font-size:13px;color:#333;letter-spacing:0.1px">71.749.920.457</div>
<div class="t" style="left:222.5px;top:543.40px;font-size:13px;color:#333;letter-spacing:0.4px">01/06/2022</div>
<div class="t" style="left:332.5px;top:543.40px;font-size:13px;color:#333;letter-spacing:0.4px">01/06/2022</div>
<div class="t" style="left:438px;top:542.40px;font-size:13px;color:#2d6fa9">PCDH13</div>
<div class="t" style="left:557.5px;top:543.40px;font-size:13px;color:#333;letter-spacing:0.12px">Thuế GTGT -&nbsp; Dịch vụ vận chuyển ngoài cửa khẩu</div>
<div class="t" style="left:1073.5px;top:543.40px;font-size:13px;color:#333;letter-spacing:0.2px">1331</div>
<div class="t" style="right:263px;top:543.40px;font-size:13px;color:#333;letter-spacing:0.1px">50.000</div>
<div class="t" style="right:142px;top:543.40px;font-size:13px;color:#333;letter-spacing:0.1px">71.749.870.457</div>
<div class="t" style="left:222.5px;top:587.40px;font-size:13px;color:#333;letter-spacing:0.4px">01/06/2022</div>
<div class="t" style="left:332.5px;top:587.40px;font-size:13px;color:#333;letter-spacing:0.4px">01/06/2022</div>
<div class="t" style="left:438px;top:586.40px;font-size:13px;color:#2d6fa9">PCDH13</div>
<div class="t" style="left:561.5px;top:587.40px;font-size:13px;color:#333;letter-spacing:0.26px">Dịch vụ vận chuyển ngoài cửa khẩu</div>
<div class="t" style="left:1073.5px;top:587.40px;font-size:13px;color:#333;letter-spacing:0.2px">1562</div>
<div class="t" style="right:263px;top:587.40px;font-size:13px;color:#333;letter-spacing:0.1px">1.000.000</div>
<div class="t" style="right:142px;top:587.40px;font-size:13px;color:#333;letter-spacing:0.1px">71.748.870.457</div>
<div class="t" style="left:222.5px;top:631.40px;font-size:13px;color:#333;letter-spacing:0.4px">01/06/2022</div>
<div class="t" style="left:332.5px;top:631.40px;font-size:13px;color:#333;letter-spacing:0.4px">01/06/2022</div>
<div class="t" style="left:438px;top:630.40px;font-size:13px;color:#2d6fa9">PCDH13</div>
<div class="t" style="left:557.5px;top:631.40px;font-size:13px;color:#333;letter-spacing:0.12px">Thuế GTGT -&nbsp; Dịch vụ vận chuyển ngoài cửa khẩu</div>
<div class="t" style="left:1073.5px;top:631.40px;font-size:13px;color:#333;letter-spacing:0.2px">1331</div>
<div class="t" style="right:263px;top:631.40px;font-size:13px;color:#333;letter-spacing:0.1px">100.000</div>
<div class="t" style="right:142px;top:631.40px;font-size:13px;color:#333;letter-spacing:0.1px">71.748.770.457</div>
<div class="t" style="left:222.5px;top:675.40px;font-size:13px;color:#333;letter-spacing:0.4px">05/06/2022</div>
<div class="t" style="left:332.5px;top:675.40px;font-size:13px;color:#333;letter-spacing:0.4px">05/06/2022</div>
<div class="t" style="left:438px;top:674.40px;font-size:13px;color:#2d6fa9">PCDH14</div>
<div class="t" style="left:561.5px;top:675.40px;font-size:13px;color:#333;letter-spacing:0.26px">Dịch vụ vận chuyển ngoài cửa khẩu</div>
<div class="t" style="left:1073.5px;top:675.40px;font-size:13px;color:#333;letter-spacing:0.2px">1562</div>
<div class="t" style="right:263px;top:675.40px;font-size:13px;color:#333;letter-spacing:0.1px">500.000</div>
<div class="t" style="right:142px;top:675.40px;font-size:13px;color:#333;letter-spacing:0.1px">71.748.270.457</div>
<div class="t" style="left:222.5px;top:719.40px;font-size:13px;color:#333;letter-spacing:0.4px">05/06/2022</div>
<div class="t" style="left:332.5px;top:719.40px;font-size:13px;color:#333;letter-spacing:0.4px">05/06/2022</div>
<div class="t" style="left:438px;top:718.40px;font-size:13px;color:#2d6fa9">PCDH14</div>
<div class="t" style="left:557.5px;top:719.40px;font-size:13px;color:#333;letter-spacing:0.12px">Thuế GTGT -&nbsp; Dịch vụ vận chuyển ngoài cửa khẩu</div>
<div class="t" style="left:1073.5px;top:719.40px;font-size:13px;color:#333;letter-spacing:0.2px">1331</div>
<div class="t" style="right:263px;top:719.40px;font-size:13px;color:#333;letter-spacing:0.1px">50.000</div>
<div class="t" style="right:142px;top:719.40px;font-size:13px;color:#333;letter-spacing:0.1px">71.748.220.457</div>
<div class="t" style="left:222.5px;top:763.40px;font-size:13px;color:#333;letter-spacing:0.4px">05/06/2022</div>
<div class="t" style="left:332.5px;top:763.40px;font-size:13px;color:#333;letter-spacing:0.4px">05/06/2022</div>
<div class="t" style="left:438px;top:762.40px;font-size:13px;color:#2d6fa9">PCDH14</div>
<div class="t" style="left:561.5px;top:763.40px;font-size:13px;color:#333;letter-spacing:0.26px">Dịch vụ vận chuyển ngoài cửa khẩu</div>
<div class="t" style="left:1073.5px;top:763.40px;font-size:13px;color:#333;letter-spacing:0.2px">1562</div>
<div class="t" style="right:263px;top:763.40px;font-size:13px;color:#333;letter-spacing:0.1px">1.000.000</div>
<div class="t" style="right:142px;top:763.40px;font-size:13px;color:#333;letter-spacing:0.1px">71.747.220.457</div>
<div class="a" style="left:188px;top:807px;width:1456px;height:33px;background:#f5f7fb"></div>
<div class="t" style="left:217.5px;top:818.24px;font-size:12px;color:#222;font-weight:bold;letter-spacing:-0.05px">Tổng cộng</div>
<div class="t" style="right:382.5px;top:817.09px;font-size:12.3px;color:#222;font-weight:bold">260.333.667</div>
<div class="t" style="right:262px;top:817.09px;font-size:12.3px;color:#222;font-weight:bold">347.576.542</div>
<div class="t" style="left:208px;top:861.34px;font-size:13.3px;color:#444">Tổng số: <b style="color:#222">482</b> bản ghi</div>
<div class="a" style="left:1170px;top:852px;width:200px;height:31px;border:1px solid #c8c8cc;border-radius:2px"></div>
<div class="t" style="left:1181px;top:861.79px;font-size:13.6px;color:#333">50 bản ghi trên 1 trang</div>
<svg class="a" style="left:1348px;top:865px;" width="10" height="7" viewBox="0 0 10 7"><path d="M0.5 0.5h9L5 6Z" fill="#333"/></svg>
<div class="t" style="left:1386px;top:862.30px;font-size:13px;color:#9a9a9a">Trước</div>
<div class="a" style="left:1434px;top:858px;width:22px;height:20px;border:1px solid #dcdcdc"></div>
<div class="t" style="left:1434.0px;width:22px;text-align:center;top:861.80px;font-size:13px;color:#222;font-weight:bold">1</div>
<div class="t" style="left:1462px;top:861.30px;font-size:13px;color:#333">2</div>
<div class="t" style="left:1483px;top:861.30px;font-size:13px;color:#333">3</div>
<div class="t" style="left:1503px;top:862.30px;font-size:13px;color:#666">...</div>
<div class="t" style="left:1527px;top:861.30px;font-size:13px;color:#333">10</div>
<div class="t" style="left:1561.5px;top:862.30px;font-size:13px;color:#333">Sau</div>
<div class="a" style="left:0px;top:896px;width:1655px;height:1px;background:#c4c4c4"></div>
</body></html>
